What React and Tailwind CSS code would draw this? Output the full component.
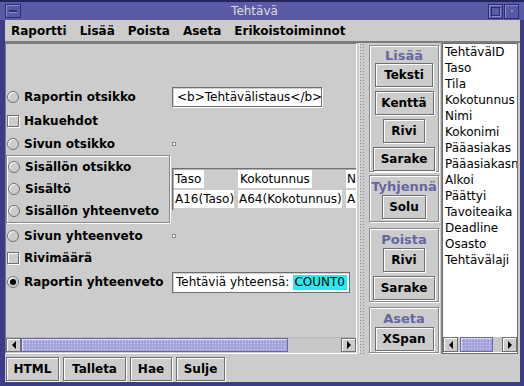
import React from "react";

const Radio = ({ checked }) => (
  <span className="w-[12px] h-[12px] rounded-full border border-[#6f6f6f] bg-[#cccccc] flex items-center justify-center shrink-0 shadow-[inset_1px_1px_0_#ffffff]">
    {checked && <span className="w-[6px] h-[6px] rounded-full bg-black" />}
  </span>
);

const Check = () => (
  <span className="w-[12px] h-[12px] border border-[#6f6f6f] bg-[#cccccc] shrink-0 shadow-[inset_1px_1px_0_#ffffff,1px_1px_0_#ffffff]" />
);

const Btn = ({ children, w }) => (
  <div
    className={
      "h-[24px] shrink-0 border border-[#6f6f6f] bg-[#cccccc] flex items-center justify-center font-bold shadow-[inset_1px_1px_0_#ffffff,1px_1px_0_#ffffff] " +
      w
    }
  >
    {children}
  </div>
);

const Dot = () => (
  <span className="w-[4px] h-[4px] shrink-0 border border-[#8a8a8a] bg-white block" />
);

const Group = ({ title, h, mt, children }) => (
  <div
    className={
      "w-[70px] shrink-0 border border-[#8a8a8a] shadow-[inset_1px_1px_0_#ffffff,1px_1px_0_#ffffff] flex flex-col items-center " +
      h +
      " " +
      mt
    }
  >
    <div className="h-[18px] flex items-center font-bold text-[#67679f] text-[13px] leading-none mt-[1px]">
      {title}
    </div>
    <div className="flex flex-col items-center gap-[4px]">{children}</div>
  </div>
);

const Arrow = ({ dir }) => (
  <div className="w-[15px] h-full border border-[#6f6f6f] bg-[#cccccc] flex items-center justify-center shrink-0 shadow-[inset_1px_1px_0_#ffffff]">
    {dir === "left" ? (
      <span className="w-0 h-0 border-y-[4px] border-y-transparent border-r-[4px] border-r-black" />
    ) : (
      <span className="w-0 h-0 border-y-[4px] border-y-transparent border-l-[4px] border-l-black" />
    )}
  </div>
);

const Thumb = ({ w }) => (
  <div
    className={
      "h-full shrink-0 border border-[#6a6aa0] bg-[#a4a4d8] bg-[radial-gradient(#d4d4ff_0.8px,transparent_0.9px)] bg-[length:3px_3px] shadow-[inset_1px_1px_0_#d8d8ff] " +
      w
    }
  />
);

const Row = ({ h, children }) => (
  <div className={"flex items-center shrink-0 whitespace-nowrap " + h}>{children}</div>
);

const Label = ({ children, control }) => (
  <div className="w-[166px] shrink-0 flex items-center gap-[5px] pl-[1px] whitespace-nowrap">
    {control}
    <span>{children}</span>
  </div>
);

export default function App() {
  const items = [
    "TehtäväID",
    "Taso",
    "Tila",
    "Kokotunnus",
    "Nimi",
    "Kokonimi",
    "Pääasiakas",
    "Pääasiakasnimi",
    "Alkoi",
    "Päättyi",
    "Tavoiteaika",
    "Deadline",
    "Osasto",
    "Tehtävälaji",
  ];
  return (
    <div className="w-[524px] h-[386px] bg-[#3b3b86] flex flex-col overflow-hidden font-['DejaVu_Sans',sans-serif] text-[12px] text-black">
      {/* title bar */}
      <div className="h-[20px] shrink-0 border-t-[2px] border-[#24245c] bg-[#5a5aa7] flex items-center pl-[5px] pr-[5px]">
        <div className="w-[16px] h-[14px] border border-[#2e2e6e] shadow-[inset_1px_1px_0_#8a8ad0] flex items-center justify-center">
          <span className="w-[8px] h-[2px] bg-[#2e2e6e] shadow-[0_1px_0_#8a8ad0]" />
        </div>
        <div className="flex-1 text-center text-[#dedede] text-[12px] leading-none">
          Tehtävä
        </div>
        <div className="w-[15px] h-[15px] border border-[#2e2e6e] shadow-[inset_1px_1px_0_#8a8ad0] flex items-center justify-center">
          <span className="w-[9px] h-[9px] border border-[#2e2e6e] shadow-[1px_1px_0_#8a8ad0]" />
        </div>
        <div className="w-[15px] h-[15px] border border-[#2e2e6e] shadow-[inset_1px_1px_0_#8a8ad0] flex items-center justify-center ml-[1px]">
          <span className="w-[2px] h-[2px] bg-[#8a8ad0]" />
        </div>
      </div>

      {/* window body */}
      <div className="flex-1 flex flex-col ml-[5px] mr-[4px] mb-[4px] bg-[#cccccc]">
        {/* menu bar */}
        <div className="h-[23px] shrink-0 flex items-center pl-[6px] gap-[13px] font-bold text-[12px] border-b-[2px] border-[#7c7c7c]">
          <span>Raportti</span>
          <span>Lisää</span>
          <span>Poista</span>
          <span>Aseta</span>
          <span>Erikoistoiminnot</span>
        </div>

        {/* main */}
        <div className="h-[311px] shrink-0 flex">
          {/* left scroll pane */}
          <div className="w-[352px] shrink-0 h-[311px] border border-[#7a7a7a] border-r-white border-b-white flex flex-col">
            <div className="flex-1 overflow-hidden relative">
              <div className="flex flex-col pt-[42px] font-bold">
                <Row h="h-[22px]">
                  <Label control={<Radio />}>Raportin otsikko</Label>
                  <div className="w-[150px] shrink-0 h-[20px] border border-[#6f6f6f] bg-white shadow-[inset_1px_1px_0_#cfcfcf,1px_1px_0_#ffffff] flex items-center pl-[4px] font-normal whitespace-nowrap">
                    &lt;b&gt;Tehtävälistaus&lt;/b&gt;
                  </div>
                </Row>
                <Row h="h-[26px]">
                  <Label control={<Check />}>Hakuehdot</Label>
                </Row>
                <Row h="h-[20px]">
                  <Label control={<Radio />}>Sivun otsikko</Label>
                  <Dot />
                </Row>
                <div className="h-[70px] shrink-0 flex">
                  <div className="w-[164px] shrink-0 h-[68px] mt-[1px] border border-[#8a8a8a] shadow-[inset_1px_1px_0_#ffffff,1px_1px_0_#ffffff] flex flex-col">
                    <Row h="h-[22px]">
                      <div className="flex items-center gap-[5px] pl-[1px]">
                        <Radio />
                        <span>Sisällön otsikko</span>
                      </div>
                    </Row>
                    <Row h="h-[22px]">
                      <div className="flex items-center gap-[5px] pl-[1px]">
                        <Radio />
                        <span>Sisältö</span>
                      </div>
                    </Row>
                    <Row h="h-[22px]">
                      <div className="flex items-center gap-[5px] pl-[1px]">
                        <Radio />
                        <span>Sisällön yhteenveto</span>
                      </div>
                    </Row>
                  </div>
                  <div className="ml-[2px] mt-[14px] flex-1 h-[42px] border-l border-t border-[#6f6f6f] shadow-[inset_1px_1px_0_#b0b0b0] font-normal flex flex-col pt-[1px] pl-[1px] gap-[2px] whitespace-nowrap">
                    <div className="flex h-[18px]">
                      <div className="w-[64px] shrink-0">
                        <span className="bg-white h-[18px] inline-flex items-center pl-[1px] pr-[3px]">Taso</span>
                      </div>
                      <div className="w-[108px] shrink-0">
                        <span className="bg-white h-[18px] inline-flex items-center pl-[2px] pr-[2px]">Kokotunnus</span>
                      </div>
                      <div className="flex-1">
                        <span className="bg-white h-[18px] flex items-center pl-[1px]">N</span>
                      </div>
                    </div>
                    <div className="flex h-[18px]">
                      <div className="w-[64px] shrink-0">
                        <span className="bg-white h-[18px] inline-flex items-center pl-[1px]">A16(Taso)</span>
                      </div>
                      <div className="w-[108px] shrink-0">
                        <span className="bg-white h-[18px] inline-flex items-center pl-[1px]">A64(Kokotunnus)</span>
                      </div>
                      <div className="flex-1">
                        <span className="bg-white h-[18px] flex items-center pl-[1px]">A</span>
                      </div>
                    </div>
                  </div>
                </div>
                <Row h="h-[24px]">
                  <Label control={<Radio />}>Sivun yhteenveto</Label>
                  <Dot />
                </Row>
                <Row h="h-[20px]">
                  <Label control={<Check />}>Rivimäärä</Label>
                </Row>
                <Row h="h-[28px]">
                  <Label control={<Radio checked />}>Raportin yhteenveto</Label>
                  <div className="w-[178px] shrink-0 h-[21px] border border-[#6f6f6f] bg-white shadow-[inset_1px_1px_0_#cfcfcf] flex items-center pl-[3px] font-normal whitespace-nowrap">
                    <span>Tehtäviä yhteensä:</span>
                    <span className="bg-[#2ee8f0] h-[15px] flex items-center ml-[4px] pl-[1px] pr-[2px]">COUNT0</span>
                  </div>
                </Row>
              </div>
            </div>
            {/* h scrollbar */}
            <div className="h-[15px] shrink-0 flex bg-[#cccccc] border-t border-[#b8b8b8] mb-[1px]">
              <Arrow dir="left" />
              <Thumb w="w-[267px]" />
              <div className="flex-1 bg-[#c8c8c8]" />
              <Arrow dir="right" />
            </div>
          </div>

          {/* divider */}
          <div className="w-[10px] shrink-0 h-full flex justify-center">
            <div className="w-[7px] h-full bg-[radial-gradient(#8c8c8c_0.7px,transparent_0.8px)] bg-[length:3px_3px] shadow-[inset_1px_0_0_#e6e6e6]" />
          </div>

          {/* buttons column */}
          <div className="w-[75px] shrink-0 h-full flex flex-col pl-[2px] border-r border-[#8a8a8a]">
            <Group title="Lisää" h="h-[127px]" mt="mt-[2px]">
              <Btn w="w-[58px]">Teksti</Btn>
              <Btn w="w-[59px]">Kenttä</Btn>
              <Btn w="w-[42px]">Rivi</Btn>
              <Btn w="w-[62px]">Sarake</Btn>
            </Group>
            <Group title="Tyhjennä" h="h-[47px]" mt="mt-[3px]">
              <Btn w="w-[44px]">Solu</Btn>
            </Group>
            <Group title="Poista" h="h-[74px]" mt="mt-[6px]">
              <Btn w="w-[42px]">Rivi</Btn>
              <Btn w="w-[62px]">Sarake</Btn>
            </Group>
            <Group title="Aseta" h="h-[46px]" mt="mt-[5px]">
              <Btn w="w-[59px]">XSpan</Btn>
            </Group>
          </div>

          {/* list */}
          <div className="w-[76px] shrink-0 h-full border border-[#6f6f6f] bg-white flex flex-col">
            <div className="flex-1 overflow-hidden pl-[2px] whitespace-nowrap">
              {items.map((t) => (
                <div key={t} className="h-[16px] leading-[16px]">
                  {t}
                </div>
              ))}
            </div>
            <div className="h-[15px] shrink-0 flex bg-[#cccccc] mb-[1px]">
              <Arrow dir="left" />
              <div className="w-[2px] shrink-0" />
              <Thumb w="w-[33px]" />
              <div className="flex-1 bg-[#c8c8c8]" />
              <Arrow dir="right" />
            </div>
          </div>
        </div>

        {/* bottom buttons */}
        <div className="flex-1 flex items-center gap-[4px] pl-[1px] pt-[2px]">
          <Btn w="w-[53px]">HTML</Btn>
          <Btn w="w-[63px]">Talleta</Btn>
          <Btn w="w-[42px]">Hae</Btn>
          <Btn w="w-[49px]">Sulje</Btn>
        </div>
      </div>
    </div>
  );
}
